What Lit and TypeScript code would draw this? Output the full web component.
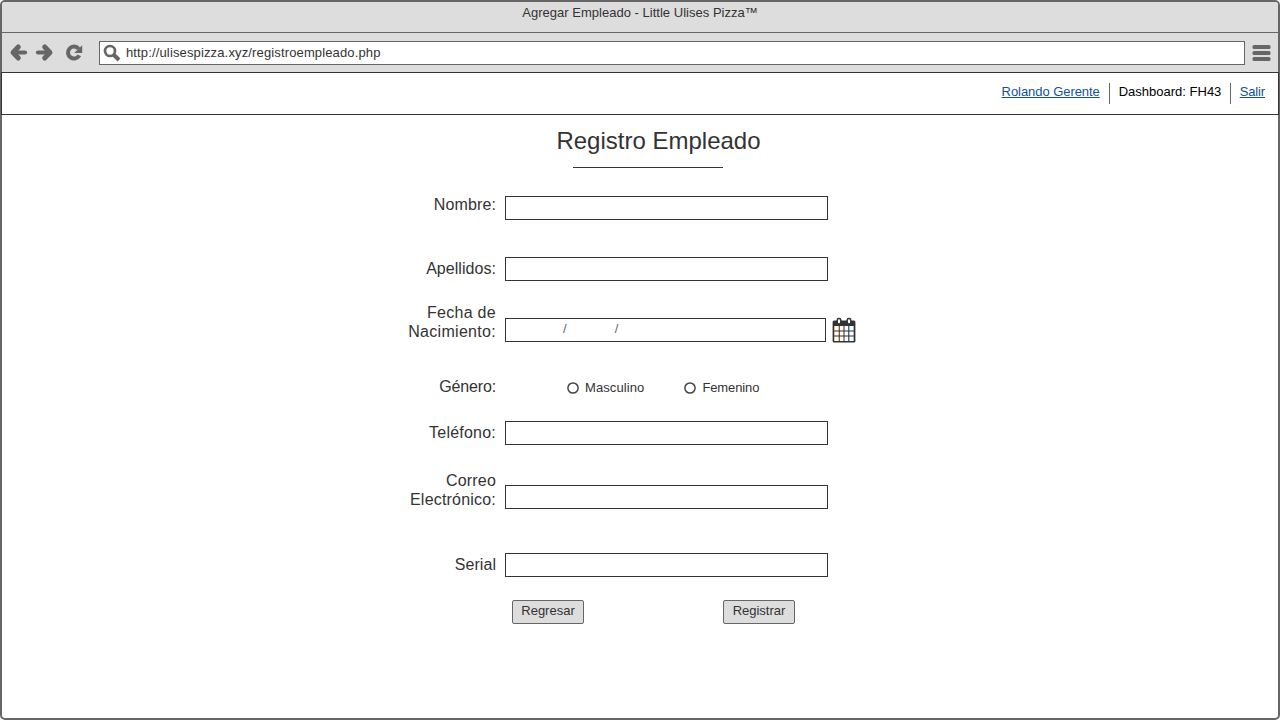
import { LitElement, html, css, nothing } from "lit";
import { customElement } from "lit/decorators.js";

interface Field {
  key: string;
  lines: string[];
}

const before: Field[] = [
  { key: "nombre", lines: ["Nombre:"] },
  { key: "apellidos", lines: ["Apellidos:"] },
];
const after: Field[] = [
  { key: "telefono", lines: ["Teléfono:"] },
  { key: "correo", lines: ["Correo", "Electrónico:"] },
  { key: "serial", lines: ["Serial"] },
];

@customElement("app-root")
export class AppRoot extends LitElement {
  static styles = css`
    :host {
      display: block;
      width: 1280px;
      height: 720px;
      overflow: hidden;
      background: #fff;
      font-family: "Liberation Sans", Arial, sans-serif;
      font-size: 13px;
      color: #333;
    }
    * { box-sizing: border-box; }
    .window {
      height: 720px;
      border: 2px solid #666;
      border-radius: 5px;
      background: #fff;
    }
    .titlebar {
      height: 31px;
      padding-top: 3px;
      line-height: 16px;
      text-align: center;
      background: #ddd;
      border-bottom: 1px solid #666;
      border-radius: 3px 3px 0 0;
      letter-spacing: 0.02px;
    }
    .toolbar {
      height: 39px;
      display: flex;
      align-items: flex-start;
      background: #ddd;
    }
    .toolbar svg { display: block; flex: none; }
    .nav { margin: 8px 0 0 7px; }
    .address {
      flex: 1;
      height: 24px;
      margin: 8px 7px 0 13px;
      display: flex;
      border: 1px solid #666;
      background: #fff;
      line-height: 22px;
      letter-spacing: 0.14px;
    }
    .address svg { margin: 2px 4px 0 3px; }
    .menu { margin: 11px 7px 0 0; }
    .userbar {
      height: 43px;
      margin: 0 -1px;
      padding: 10px 13px 0 0;
      border: 1px solid #333;
      display: flex;
      justify-content: flex-end;
      line-height: 17px;
    }
    .userbar a { color: #0f5391; text-decoration: underline; }
    .userbar a:first-child { letter-spacing: -0.06px; }
    .userbar a:last-child { letter-spacing: -0.15px; }
    .here { width: 122px; height: 21px; margin: 0 9px; padding-left: 9px; border: solid #666; border-width: 0 1px; color: #000; white-space: nowrap; }
    h1 {
      margin: 11px 0 0 37px;
      text-align: center;
      font-size: 24px;
      line-height: 29px;
      font-weight: 400;
    }
    .rule { width: 150px; height: 1px; margin: 12px 0 27px 571px; background: #333; }
    form { width: 460px; margin-left: 394px; }
    .row { display: grid; grid-template-columns: 100px 1fr; column-gap: 9px; align-items: start; }
    label.name { font-size: 16px; line-height: 19px; text-align: right; letter-spacing: 0.12px; }
    input.text { display: block; width: 323px; height: 24px; margin: 1px 0 0; padding: 0 4px; border: 1px solid #333; border-radius: 0; background: #fff; outline: none; }
    .nombre { height: 61px; }
    .apellidos { height: 47px; }
    .fecha { height: 72px; }
    .genero { height: 45px; }
    .telefono { height: 51px; }
    .correo { height: 81px; }
    .serial { height: 48px; }
    .apellidos label.name, .telefono label.name, .serial label.name { margin-top: 3px; }
    .apellidos label.name, .serial label.name { letter-spacing: 0.05px; }
    .telefono label.name { letter-spacing: 0.22px; }
    .fecha label.name { letter-spacing: 0.3px; }
    .genero label.name { margin-top: 2px; letter-spacing: -0.15px; }
    .correo label.name { letter-spacing: 0.2px; }
    .correo input.text { margin-top: 14px; }
    .when { display: flex; margin-top: 15px; }
    .date { width: 321px; height: 24px; border: 1px solid #333; padding-left: 57px; display: flex; gap: 48px; line-height: 19px; color: #666; }
    .when svg { margin: -1px 0 0 6px; }
    .options { display: flex; margin-top: 5px; padding-left: 62px; line-height: 16px; gap: 40px; }
    .option { display: flex; gap: 6px; }
    .option:first-child { letter-spacing: 0.1px; }
    .option:last-child { letter-spacing: -0.12px; }
    .dot { flex: none; margin-top: 2px; }
    .actions { display: flex; gap: 139px; padding-left: 116px; }
    button { width: 72px; height: 24px; padding: 0 0 3px; border: 1px solid #666; border-radius: 2px; background: #ddd; font: inherit; color: #333; line-height: 18px; }
  `;

  private field(f: Field) {
    return html`<div class="row ${f.key}">
      <label class="name" for=${f.key}>${f.lines.map((l, i) => html`${i ? html`<br />` : nothing}${l}`)}</label>
      <input class="text" id=${f.key} type="text" />
    </div>`;
  }

  private option(text: string) {
    return html`<span class="option"><svg class="dot" width="12" height="12" viewBox="0 0 12 12"><circle cx="6" cy="6" r="5.100" fill="#fff" stroke="#444" stroke-width="1.500" /></svg>${text}</span>`;
  }

  render() {
    return html`
      <div class="window">
        <div class="titlebar">Agregar Empleado - Little Ulises Pizza™</div>
        <div class="toolbar">
          <svg class="nav" width="77" height="24" viewBox="0 0 77 24" fill="none" stroke="#666" stroke-width="5" stroke-linecap="round" stroke-linejoin="round">
            <path d="M9.300 6 L4 11.500 L9.300 17" />
            <path d="M5 11.500 H16" stroke-width="4.200" />
            <path d="M35.700 6 L41 11.500 L35.700 17" />
            <path d="M40 11.500 H29" stroke-width="4.200" />
            <path d="M69.600 7.700 A6 6 0 1 0 70.300 14.400" stroke-width="4" stroke-linecap="butt" />
            <path d="M73.200 4.200 V12 H65.200 Z" fill="#666" stroke="none" />
          </svg>
          <div class="address">
            <svg width="19" height="18" viewBox="0 0 19 18" fill="none" stroke="#666">
              <circle cx="7" cy="7" r="5" stroke-width="2.700" />
              <path d="M11 11 L16 16" stroke-width="4" />
            </svg>
            <span>http://ulisespizza.xyz/registroempleado.php</span>
          </div>
          <svg class="menu" width="19" height="18" viewBox="0 0 19 18" fill="#666">
            <rect x="0.500" y="1" width="18" height="4" rx="1.500" />
            <rect x="0.500" y="7" width="18" height="4" rx="1.500" />
            <rect x="0.500" y="13" width="18" height="4" rx="1.500" />
          </svg>
        </div>
        <div class="userbar">
          <a>Rolando Gerente</a><span class="here">Dashboard: FH43</span><a>Salir</a>
        </div>
        <h1>Registro Empleado</h1>
        <div class="rule"></div>
        <form>
          ${before.map((f) => this.field(f))}
          <div class="row fecha">
            <label class="name">Fecha de<br />Nacimiento:</label>
            <div class="when">
              <div class="date"><span>/</span><span>/</span></div>
              <svg width="24" height="26" viewBox="0 0 24 26">
                <rect x="0.600" y="3.500" width="22.800" height="22" rx="1.500" fill="#333" />
                <rect x="2" y="9" width="20" height="15" fill="#fff" />
                <path d="M2.500 9v15M6.500 9v15M11.500 9v15" stroke="#f0bd80" />
                <path d="M12.500 9v15M17.500 9v15M21.500 9v15" stroke="#8ec4f0" />
                <path d="M7.500 9v15M16.500 9v15" stroke="#665f5a" />
                <path d="M12 9v15" stroke="#555" stroke-width="0.800" />
                <path d="M2 14h20M2 19h20" stroke="#333" stroke-width="1.200" />
                <rect x="5.200" y="1.600" width="3.600" height="5.400" rx="1.700" fill="#fff" stroke="#333" stroke-width="1.500" />
                <rect x="15.200" y="1.600" width="3.600" height="5.400" rx="1.700" fill="#fff" stroke="#333" stroke-width="1.500" />
              </svg>
            </div>
          </div>
          <div class="row genero">
            <label class="name">Género:</label>
            <div class="options">${this.option("Masculino")}${this.option("Femenino")}</div>
          </div>
          ${after.map((f) => this.field(f))}
          <div class="actions">
            <button type="button">Regresar</button>
            <button type="button">Registrar</button>
          </div>
        </form>
      </div>
    `;
  }
}
